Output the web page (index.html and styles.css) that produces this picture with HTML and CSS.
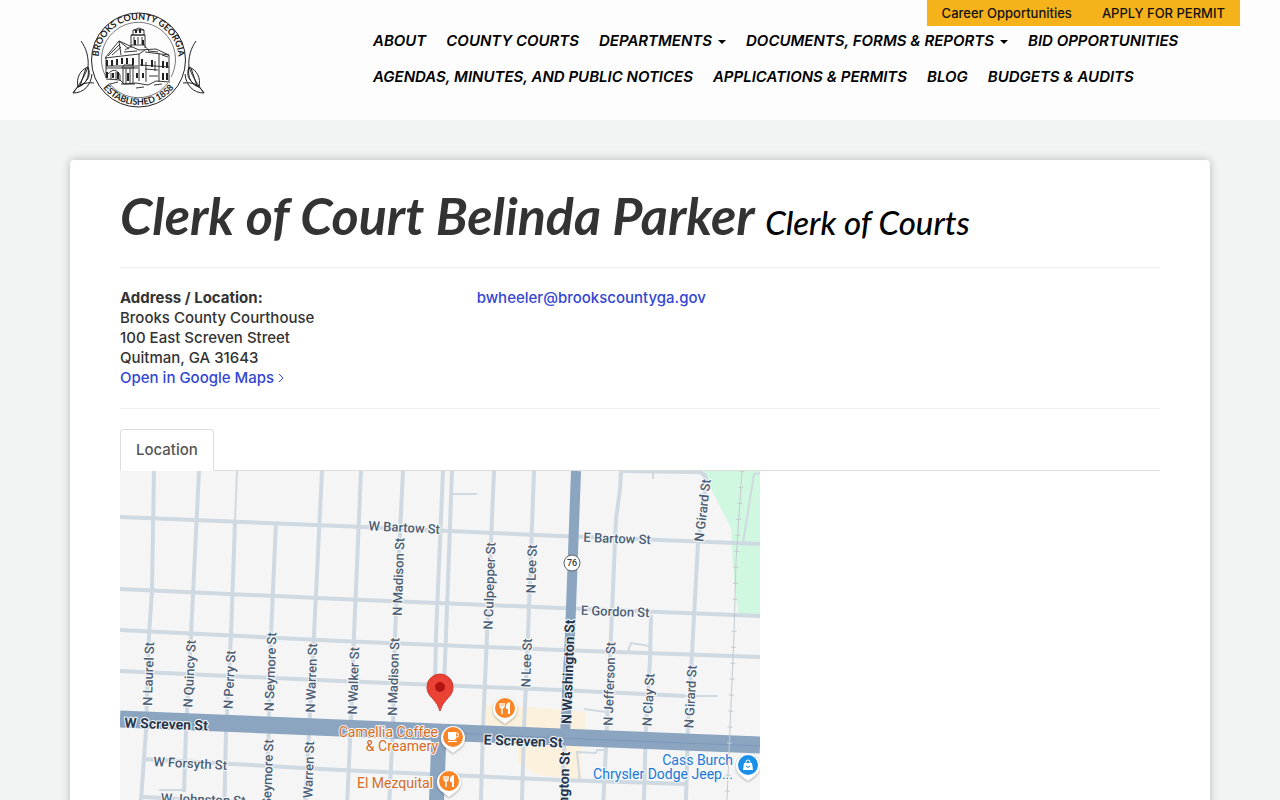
FILE: index.html
```html
<!DOCTYPE html>
<html lang="en">
<head>
    <meta charset="UTF-8">
    <meta name="viewport" content="width=device-width, initial-scale=1.0">
    <title>Clerk of Court Belinda Parker</title>
    <link rel="stylesheet" href="styles.css">
</head>
<body>
    <header class="header">
        <a href="#" class="logo" aria-label="Brooks County Georgia">
            <svg width="134" height="98" viewBox="72 11 134 98" fill="none" stroke="#222">
                <defs>
                    <path id="sealTop" d="M99 66a40 40 0 1 1 79 0"/>
                    <path id="sealBottom" d="M93.500 60a45 45 0 0 0 90 0"/>
                </defs>
                <circle cx="138.500" cy="60" r="47" stroke-width="1"/>
                <path d="M106 77a37 37 0 1 1 65 0M109 83a37 37 0 0 0 59 0" stroke-width=".6"/>
                <text class="seal-text"><textPath href="#sealTop" startOffset="50%">BROOKS COUNTY GEORGIA</textPath></text>
                <text class="seal-text"><textPath href="#sealBottom" startOffset="50%">ESTABLISHED 1858</textPath></text>
                <!-- courthouse -->
                <g stroke-width=".9">
                    <path d="M105 58l14-17 20 9 17-1 13 6v26M105 58l34-4 6-4M145 52l24 3M106 58v20M119 41l2 14M119 41l10 8M139 54v27M159 53v29M106 66h32M106 68h32M140 65l29 2M145 69l13 1"/>
                    <path d="M131 48V35h14v13M133 35v-5h11v5M134 30l5-2 5 2M131 35h14M131 45h14M134 37v7M138 37v7M142 37v7M125 50l6-4M145 46l4 5M108 56l12-12M112 55l9-8M124 52l13-1M148 51l10 1M162 55l6 2"/>
                    <path d="M106 79l14 1 4 4 12-1 12 2 8-4 14 1M110 84l8-2M144 87l-8 1M154 85l8-1M108 74c4-5 9-5 12 1v6M111 73v6M116 72v8M146 62v20M155 61v10M149 76h9"/>
                    <path d="M122 68h12l-2-3h-8zM123 69v15M126 69v15M130 69v15M133 69v15M121 84h14"/>
                </g>
                <g stroke-width="2">
                    <path d="M107 60v6M112 60v6M117 59v6M122 58v6M127 58v6M133 58v7M142 59v7M152 60v7M163 61v7M167 62v6"/>
                    <path d="M107 72v6M113 73v5M118 72v7M137 73v5M143 73v5M163 73v7M167 73v7M128 73v8"/>
                    <path d="M136 33v-3M140 33v-4M143 40v5M135 40v5"/>
                </g>
                <!-- leaves on both sides -->
                <g stroke-width="1">
                    <path d="M81 41c5 7 8 16 7 26M88 67c-8 3-12 11-10 20 7-2 12-9 10-20zM88 67c3 8 1 14-10 20M88 67c-3 8-6 14-15 26 11 0 18-8 19-19M73 93c6-9 12-11 21-10M86 68l-6 18"/>
                    <path d="M196 41c-5 7-8 16-7 26M189 67c8 3 12 11 10 20-7-2-12-9-10-20zM189 67c-3 8-1 14 10 20M189 67c3 8 6 14 15 26-11 0-18-8-19-19M204 93c-6-9-12-11-21-10M191 68l6 18"/>
                </g>
            </svg>
        </a>
        <div class="header-right">
            <div class="topbar">
                <a href="#">Career Opportunities</a>
                <a href="#">APPLY FOR PERMIT</a>
            </div>
            <nav class="menu">
                <a href="#">ABOUT</a>
                <a href="#">COUNTY COURTS</a>
                <a href="#" class="dropdown">DEPARTMENTS</a>
                <a href="#" class="dropdown">DOCUMENTS, FORMS &amp; REPORTS</a>
                <a href="#">BID OPPORTUNITIES</a>
                <a href="#">AGENDAS, MINUTES, AND PUBLIC NOTICES</a>
                <a href="#">APPLICATIONS &amp; PERMITS</a>
                <a href="#">BLOG</a>
                <a href="#">BUDGETS &amp; AUDITS</a>
            </nav>
        </div>
    </header>

    <main class="container">
        <h1>Clerk of Court Belinda Parker <small>Clerk of Courts</small></h1>
        <div class="info">
            <address>
                <strong>Address / Location:</strong><br>
                Brooks County Courthouse<br>
                100 East Screven Street<br>
                Quitman, GA 31643<br>
                <a href="#">Open in Google Maps <svg width="6" height="10" viewBox="0 0 6 10" fill="none" stroke="currentColor"><path d="M1 1l4 4-4 4"/></svg></a>
            </address>
            <div>
                <a href="mailto:bwheeler@brookscountyga.gov">bwheeler@brookscountyga.gov</a>
            </div>
        </div>
        <div class="tabs">
            <a href="#map" class="tab">Location</a>
        </div>
        <svg id="map" class="map" viewBox="120 471 640 400">
            <rect x="120" y="471" width="640" height="400" fill="#f5f5f5"/>
            <path class="park" d="M704 471l8 20 19 37 2 40 5 47h22V471z"/>
            <path class="block" d="M486 705l42 2 57 5v20l-99-5zM518 745h64v35l-44-5-20-12z"/>

            <g class="road">
                <path d="M120 517l220 9 220 10 200 8"/>
                <path d="M120 589l220 10 220 9 200 8"/>
                <path d="M120 630l220 11 220 9 200 7"/>
                <path d="M120 671l220 10 220 9 125 6"/>
                <path d="M143 759l197 11 220 10 126 4M143 797l160 8"/>
                <path d="M154 471l-2 119-3 45-3 95-5 70v71"/>
                <path d="M199 471l-8 164-5 95-2 62"/>
                <path d="M235 522l-4 113-5 97-3 139"/>
                <path d="M276 522l-5 113-4 165-3 71"/>
                <path d="M322 471l-8 164-5 97-7 139"/>
                <path d="M361 471l-7 164-3 85-7 151"/>
                <path d="M403 471l-8 164-2 90-7 146"/>
                <path d="M443 471l-7 164-1 50M452 471l-6 164-2 50"/>
                <path d="M494 471l-7 164-4 93-4 143"/>
                <path d="M534 471l-6 164-4 93-4 143M565 728l-6 143"/>
                <path d="M621 471l-1 18-4 30-5 116-4 90-7 146"/>
                <path d="M651 615l-1 45-4 65-4 146"/>
                <path d="M622 471l76 1q9 1 8 11l-8 60-5 92-5 93-4 143"/>
            </g>
            <g class="road lane">
                <path d="M237 471l-2 50M453 494h24M685 696h32M653 471v8M743 543l11-69 6-1M159 790h24M584 709l22 3M628 651l3-8 19 3"/>
                <path d="M580 782l-3-30 19 1 1-3h10"/>
            </g>
            <path class="highway" d="M576 471l-6 164-5 100"/>
            <path class="highway wide" d="M439 733l-5 138"/>
            <path class="highway main" d="M120 719l220 9 220 9 200 8"/>
            <path class="median" d="M455 733l105 5 200 8"/>
            <path class="rail" d="M742 471l-6 89-2 75-4 93-6 143"/>
            <path class="rail-ties" d="M742 471l-6 89-2 75-4 93-6 143"/>

            <g class="label">
                <text transform="translate(404 532) rotate(3)">W Bartow St</text>
                <text transform="translate(617 543) rotate(2)">E Bartow St</text>
                <text transform="translate(615 616) rotate(2)">E Gordon St</text>
                <text transform="translate(190 768) rotate(3)">W Forsyth St</text>
                <text transform="translate(203 804) rotate(2)">W Johnston St</text>
                <text transform="translate(153 674) rotate(-88)">N Laurel St</text>
                <text transform="translate(194 674) rotate(-87)">N Quincy St</text>
                <text transform="translate(234 680) rotate(-87)">N Perry St</text>
                <text transform="translate(275 672) rotate(-88)">N Seymore St</text>
                <text transform="translate(316 678) rotate(-88)">N Warren St</text>
                <text transform="translate(358 681) rotate(-88)">N Walker St</text>
                <text transform="translate(398 677) rotate(-88)">N Madison St</text>
                <text transform="translate(403 577) rotate(-88)">N Madison St</text>
                <text transform="translate(494 586) rotate(-88)">N Culpepper St</text>
                <text transform="translate(536 569) rotate(-88)">N Lee St</text>
                <text transform="translate(531 663) rotate(-88)">N Lee St</text>
                <text transform="translate(614 684) rotate(-88)">N Jefferson St</text>
                <text transform="translate(653 700) rotate(-87)">N Clay St</text>
                <text transform="translate(695 697) rotate(-87)">N Girard St</text>
                <text transform="translate(707 511) rotate(-83)">N Girard St</text>
                <text transform="translate(272 779) rotate(-88)">N Seymore St</text>
                <text transform="translate(313 776) rotate(-88)">N Warren St</text>
            </g>
            <g class="label bold">
                <text transform="translate(166 729) rotate(2)">W Screven St</text>
                <text transform="translate(523 746) rotate(2)">E Screven St</text>
                <text transform="translate(573 672) rotate(-88)">N Washington St</text>
                <text transform="translate(568 804) rotate(-88)">N Washington St</text>
            </g>
            <g class="label place food">
                <text x="438" y="737">Camellia Coffee</text>
                <text x="438" y="751">&amp; Creamery</text>
                <text x="433" y="788">El Mezquital</text>
            </g>
            <g class="label place shop">
                <text x="733" y="765">Cass Burch</text>
                <text x="733" y="779">Chrysler Dodge Jeep...</text>
            </g>

            <circle cx="572" cy="563" r="8" fill="#fff" stroke="#5b6470" stroke-width="1"/>
            <text class="route" x="572" y="566">76</text>

            <defs>
                <path id="pin" d="M0 16l-8-6a12 12 0 1 1 16 0z" stroke-linejoin="round"/>
                <g id="fork">
                    <path d="M-5-5v3q0 2 2 2t2-2v-3M-3-5V6" fill="none" stroke="#fff" stroke-width="1.400"/>
                    <path d="M1-2q0-3 4-4V6H3V1H1z" fill="#fff"/>
                </g>
            </defs>
            <g class="pin-food" transform="translate(505 708)"><use href="#pin"/><circle r="10"/><use href="#fork"/></g>
            <g class="pin-food" transform="translate(449 781)"><use href="#pin"/><circle r="10"/><use href="#fork"/></g>
            <g class="pin-food" transform="translate(453 737)">
                <use href="#pin"/><circle r="10"/>
                <path d="M-5-5h8v6q0 2-2 2h-4q-2 0-2-2zM-5 4h9v1h-9z" fill="#fff"/>
                <path d="M3-4h2v4H3" fill="none" stroke="#fff"/>
            </g>
            <g class="pin-shop" transform="translate(748 765)">
                <use href="#pin"/><circle r="10"/>
                <path d="M-4-2h8l1 7H-5z" fill="#fff"/>
                <path d="M-2-2v-1q0-2 2-2t2 2v1" fill="none" stroke="#fff"/>
                <path d="M-2 1q2 3 4 0" fill="none" stroke="#1a8fe8"/>
            </g>
            <path d="M440 711q-2-7-7-12c-4-4-6-7-6-12a13 13 0 1 1 26 0c0 5-2 8-6 12q-5 5-7 12z" fill="#ea4335" stroke="#c5221f" stroke-width=".8"/>
            <circle cx="440" cy="687" r="5" fill="#b31412"/>
        </svg>
    </main>
</body>
</html>
```
FILE: styles.css
```css
body {
    margin: 0;
    background-color: #f2f4f4;
    font-family: Inter, "Liberation Sans", sans-serif;
    font-size: 15px;
    font-weight: 500;
    line-height: 20px;
    color: #333;
}
a {
    color: #3346d3;
    text-decoration: none;
}
.header {
    display: grid;
    grid-template-columns: 291px 1fr;
    min-height: 120px;
    padding: 0 40px 0 72px;
    box-sizing: border-box;
    background-color: #fdfdfd;
}
.logo {
    padding-top: 11px;
}
.seal-text {
    font-family: Lato, sans-serif;
    font-size: 9px;
    font-weight: 700;
    text-anchor: middle;
    fill: #222;
    stroke: none;
}
.topbar {
    display: flex;
    width: fit-content;
    margin-left: auto;
    background-color: #f5b21b;
}
.topbar a {
    padding: 3px 15px;
    font-size: 13px;
    color: #111;
}
.menu {
    display: flex;
    flex-wrap: wrap;
    row-gap: 6px;
    max-width: 840px;
}
.menu a {
    padding: 0 10px;
    line-height: 30px;
    font-size: 15px;
    font-weight: 600;
    font-style: italic;
    color: #000;
}
.dropdown::after {
    content: "";
    display: inline-block;
    margin-left: 6px;
    vertical-align: middle;
    border-top: 4px solid;
    border-left: 4px solid transparent;
    border-right: 4px solid transparent;
}
.container {
    max-width: 1040px;
    margin: 40px auto;
    padding: 22px 50px 50px;
    background-color: #fff;
    border-radius: 4px;
    box-shadow: 0 0 10px rgba(0, 0, 0, 0.25);
}
h1 {
    margin: 0 0 20px;
    padding-bottom: 19px;
    border-bottom: 1px solid #eee;
    font-family: Lato, sans-serif;
    font-size: 52px;
    line-height: 66px;
    font-weight: 700;
    font-style: italic;
}
h1 small {
    font-size: 33px;
    line-height: 1;
    font-weight: 500;
    color: #000;
}
.info {
    display: grid;
    grid-template-columns: 1fr 2fr;
    column-gap: 15px;
    padding-bottom: 20px;
    margin-bottom: 20px;
    border-bottom: 1px solid #eee;
}
address {
    font-style: normal;
}
.tabs {
    display: flex;
    border-bottom: 1px solid #ddd;
}
.tab {
    margin-bottom: -1px;
    padding: 10px 15px;
    border: 1px solid #ddd;
    border-bottom-color: #fff;
    border-radius: 4px 4px 0 0;
    background-color: #fff;
    color: #555;
}
.map {
    display: block;
    width: 100%;
    max-width: 640px;
}
.park {
    fill: #d0f7df;
}
.block {
    fill: #fbf1dc;
}
.road {
    fill: none;
    stroke: #cfd9e1;
    stroke-width: 4;
}
.lane {
    stroke-width: 2;
}
.highway {
    fill: none;
    stroke: #8ba5c1;
    stroke-width: 10;
}
.highway.wide {
    stroke-width: 15;
}
.highway.main {
    stroke-width: 17;
}
.median {
    fill: none;
    stroke: #7b98b8;
}
.rail,
.rail-ties {
    fill: none;
    stroke: #c4cbd0;
}
.rail-ties {
    stroke-width: 5;
    stroke-dasharray: 1 15;
}
.label {
    font-family: Roboto, sans-serif;
    font-size: 13px;
    font-weight: 500;
    text-anchor: middle;
    fill: #4d5e74;
    stroke: #f7f9fa;
    stroke-width: 2;
    stroke-linejoin: round;
    paint-order: stroke;
}
.label.bold {
    font-size: 14px;
    font-weight: 700;
    fill: #26364d;
}
.label.place {
    font-size: 14px;
    font-weight: 400;
    text-anchor: end;
}
.label.food {
    fill: #d56b1f;
}
.label.shop {
    fill: #2177d8;
}
.route {
    font-family: Roboto, sans-serif;
    font-size: 9px;
    text-anchor: middle;
    fill: #333;
}
.pin-food,
.pin-shop {
    filter: drop-shadow(0 1px 1px rgba(0, 0, 0, 0.3));
}
.pin-food use,
.pin-shop use {
    fill: #fff;
}
.pin-food circle {
    fill: #fa8526;
}
.pin-shop circle {
    fill: #1a8fe8;
}
```
